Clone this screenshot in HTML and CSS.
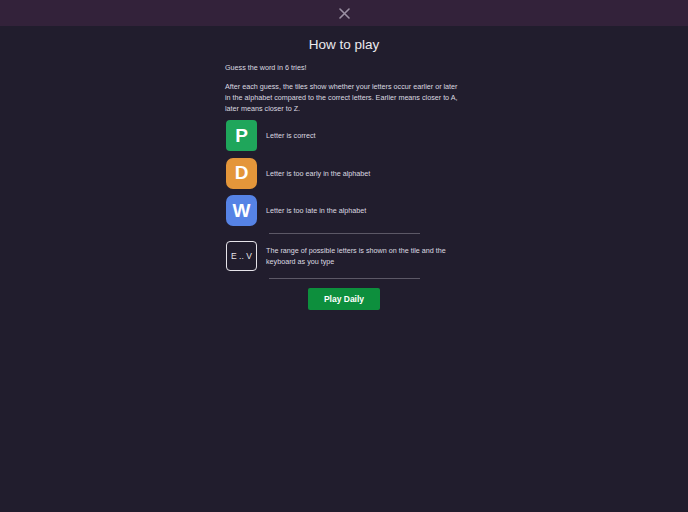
FILE: index.html
```html
<!DOCTYPE html>
<html lang="en">
<head>
  <meta charset="UTF-8" />
  <meta name="viewport" content="width=device-width, initial-scale=1.0"/>
  <title>How to play</title>
  <link rel="stylesheet" href="styles.css">
</head>
<body>
  <div class="topbar">
    <button class="close" aria-label="Close">
      <svg width="11" height="11" viewBox="0 0 11 11">
        <path d="M1 1 L10 10 M10 1 L1 10" stroke="#9b90a3" stroke-width="1.6" stroke-linecap="round" fill="none"/>
      </svg>
    </button>
  </div>

  <div class="help">
    <h1 class="title">How to play</h1>
    <p class="text">Guess the word in 6 tries!</p>
    <p class="text">After each guess, the tiles show whether your letters occur earlier or later in the alphabet compared to the correct letters. Earlier means closer to A, later means closer to Z.</p>

    <div class="legend">
      <div class="row">
        <div class="tile correct">P</div>
        <span class="label">Letter is correct</span>
      </div>
      <div class="row">
        <div class="tile early">D</div>
        <span class="label">Letter is too early in the alphabet</span>
      </div>
      <div class="row">
        <div class="tile late">W</div>
        <span class="label">Letter is too late in the alphabet</span>
      </div>
    </div>

    <hr class="rule">

    <div class="row">
      <div class="tile range">E .. V</div>
      <span class="label">The range of possible letters is shown on the tile and the keyboard as you type</span>
    </div>

    <hr class="rule">

    <div class="actions">
      <button class="play">Play Daily</button>
    </div>
  </div>
</body>
</html>
```

FILE: styles.css
```css
* {
  margin: 0;
  padding: 0;
  box-sizing: border-box;
}
body {
  background-color: #211d2d;
  font-family: "Liberation Sans", Arial, sans-serif;
  color: #dcdae0;
}
.topbar {
  display: flex;
  height: 26px;
  align-items: center;
  justify-content: center;
  background-color: #33223a;
}
.close {
  display: flex;
  background: none;
  border: none;
}
.help {
  width: 238px;
  margin: 0 auto;
}
.title {
  margin-top: 11px;
  font-size: 13.5px;
  line-height: 16px;
  font-weight: 400;
  text-align: center;
  color: #ebe9ee;
}
.text {
  margin-top: 9px;
  font-size: 7.2px;
  line-height: 11px;
}
.text + .text {
  margin-top: 8px;
}
.legend {
  display: flex;
  flex-direction: column;
  gap: 6.5px;
  margin-top: 6px;
}
.row {
  display: flex;
  align-items: center;
  gap: 9px;
  padding-left: 1px;
}
.tile {
  display: flex;
  flex-shrink: 0;
  width: 31px;
  height: 31px;
  align-items: center;
  justify-content: center;
  border-radius: 5px;
  font-size: 19px;
  font-weight: 700;
  color: #fff;
}
.correct {
  background-color: #1fa65b;
  border-radius: 4px;
}
.early {
  background-color: #e4963a;
  border-radius: 7px;
}
.late {
  background-color: #5683e5;
  border-radius: 7px;
}
.range {
  height: 30px;
  border: 1.5px solid #e6e4ea;
  border-radius: 4px;
  font-size: 8.5px;
  font-weight: 400;
  color: #e6e4ea;
}
.label {
  font-size: 7.2px;
  line-height: 11px;
}
.rule {
  width: 151px;
  margin: 7px auto 7px;
  border: none;
  border-top: 1px solid #5c5866;
}
.actions {
  display: flex;
  justify-content: center;
  margin-top: 9px;
}
.play {
  width: 72px;
  height: 22px;
  border: none;
  border-radius: 2px;
  background-color: #0d8f3d;
  color: #fff;
  font-family: "Liberation Sans", Arial, sans-serif;
  font-size: 8.5px;
  font-weight: 700;
}
```
